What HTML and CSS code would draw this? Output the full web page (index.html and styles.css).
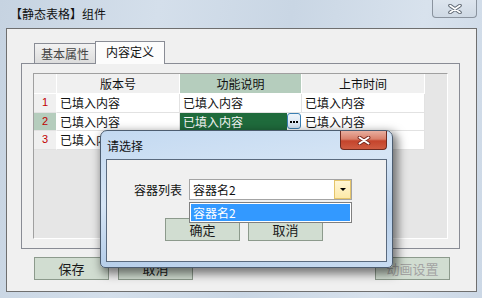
FILE: index.html
```html
<!DOCTYPE html>
<html lang="zh-CN">
<head>
    <meta charset="UTF-8">
    <title>【静态表格】组件</title>
    <link rel="stylesheet" href="styles.css">
</head>
<body>
    <div class="window">
        <div class="titlebar">
            <span class="title">【静态表格】组件</span>
            <div class="close-btn">
                <svg width="14" height="10" viewBox="0 0 14 10">
                    <path d="M2 1.5 L12 8.5 M12 1.5 L2 8.5" stroke="#5f6873" stroke-width="3.6" stroke-linecap="round"/>
                    <path d="M2 1.5 L12 8.5 M12 1.5 L2 8.5" stroke="#fff" stroke-width="1.6" stroke-linecap="round"/>
                </svg>
            </div>
        </div>

        <div class="client">
            <!-- tabs -->
            <div class="tabs">
                <div class="tab">基本属性</div>
                <div class="tab active">内容定义</div>
            </div>
            <div class="panel">
                <div class="grid">
                    <div class="cell head"></div>
                    <div class="cell head">版本号</div>
                    <div class="cell head sel-head">功能说明</div>
                    <div class="cell head">上市时间</div>

                    <div class="cell num">1</div>
                    <div class="cell">已填入内容</div>
                    <div class="cell">已填入内容</div>
                    <div class="cell">已填入内容</div>

                    <div class="cell num sel-num">2</div>
                    <div class="cell">已填入内容</div>
                    <div class="cell current">
                        <span class="current-text">已填入内容</span>
                        <span class="dots-btn">
                            <svg width="12" height="14" viewBox="0 0 12 14">
                                <rect x="2" y="7" width="2" height="2" fill="#000"/>
                                <rect x="5" y="7" width="2" height="2" fill="#000"/>
                                <rect x="8" y="7" width="2" height="2" fill="#000"/>
                            </svg>
                        </span>
                    </div>
                    <div class="cell">已填入内容</div>

                    <div class="cell num">3</div>
                    <div class="cell">已填入内容</div>
                    <div class="cell">已填入内容</div>
                    <div class="cell">已填入内容</div>
                </div>
            </div>
            <div class="buttons">
                <button type="button" class="btn">保存</button>
                <button type="button" class="btn">取消</button>
                <button type="button" class="btn disabled push-right">动画设置</button>
            </div>
        </div>

        <!-- modal dialog -->
        <div class="dialog">
            <div class="dialog-titlebar">
                <span class="dialog-title">请选择</span>
                <div class="dialog-close">
                    <svg width="14" height="9" viewBox="0 0 14 9">
                        <path d="M2.5 1.5 L11.5 7.5 M11.5 1.5 L2.5 7.5" stroke="#7a2a20" stroke-width="3.8" stroke-linecap="round"/>
                        <path d="M2.5 1.5 L11.5 7.5 M11.5 1.5 L2.5 7.5" stroke="#fff" stroke-width="2" stroke-linecap="round"/>
                    </svg>
                </div>
            </div>
            <div class="dialog-client">
                <div class="field-row">
                    <span class="field-label">容器列表</span>
                    <div class="combo">
                        <span class="combo-text">容器名2</span>
                        <span class="combo-arrow"></span>
                        <div class="combo-list">
                            <div class="combo-item">容器名2</div>
                        </div>
                    </div>
                </div>
                <div class="dialog-buttons">
                    <button type="button" class="btn">确定</button>
                    <button type="button" class="btn">取消</button>
                </div>
            </div>
        </div>
    </div>
</body>
</html>
```

FILE: styles.css
```css
body {
    margin: 0;
    width: 482px;
    height: 298px;
    overflow: hidden;
    font-family: "Noto Sans CJK SC", "Noto Sans", sans-serif;
    font-size: 12px;
    color: #111;
    background: linear-gradient(100deg, #c6d3e1 0%, #d4dfeb 30%, #c9d6e4 55%, #d8e2ed 80%, #ccd8e6 100%);
}

.window {
    position: relative;
    height: 298px;
    display: flex;
    flex-direction: column;
}

.titlebar {
    height: 28px;
    display: flex;
    align-items: flex-start;
    flex-shrink: 0;
}

.title {
    line-height: 28px;
    padding-left: 10px;
}

.close-btn {
    margin-left: auto;
    margin-right: 5px;
    width: 45px;
    height: 18px;
    box-sizing: border-box;
    border: 1px solid #8a939e;
    border-top: none;
    border-radius: 0 0 4px 4px;
    background: linear-gradient(#dde5ee, #cfd9e4);
    display: flex;
    align-items: center;
    justify-content: center;
}

.client {
    flex: 1;
    margin: 0 5px 6px 6px;
    border: 1px solid #6f6f6f;
    background-color: #f0f0f0;
    padding: 12px 0 0 14px;
}

/* tabs */
.tabs {
    display: flex;
    align-items: flex-end;
    height: 22px;
    padding-left: 13px;
}

.tab {
    height: 20px;
    box-sizing: border-box;
    padding: 0 6px;
    border: 1px solid #898c95;
    border-bottom: none;
    background: linear-gradient(#f2f2f2, #dcdcdc);
    color: #444;
    line-height: 19px;
}

.tab.active {
    height: 23px;
    margin-bottom: -1px;
    margin-left: -1px;
    padding: 0 10px;
    background: #fcfcfc;
    color: #111;
    line-height: 20px;
    position: relative;
}

.panel {
    width: 439px;
    height: 186px;
    box-sizing: border-box;
    border: 1px solid #898c95;
    padding: 9px 0 0 11px;
}

.grid {
    width: 415px;
    height: 166px;
    box-sizing: border-box;
    border-left: 1px solid #a0a0a0;
    border-top: 1px solid #a0a0a0;
    border-right: 1px solid #fff;
    border-bottom: 1px solid #fff;
    background-color: #e6e6e6;
    display: grid;
    grid-template-columns: 23px 123px 122px 123px;
    grid-template-rows: 20px 19px 18px 19px;
    align-content: start;
}

.cell {
    box-sizing: border-box;
    border-right: 1px solid #e2e2e2;
    border-bottom: 1px solid #e2e2e2;
    background-color: #fff;
    padding-left: 3px;
    line-height: 17px;
    white-space: nowrap;
    overflow: hidden;
}

.cell.head {
    background-color: #f0f0f0;
    border-color: #fff;
    text-align: center;
    padding-left: 0;
    line-height: 19px;
}

.cell.sel-head {
    background-color: #b5cdbd;
}

.cell.num {
    background-color: #f0f0f0;
    border-right-color: #fff;
    color: #c00000;
    text-align: center;
    padding-left: 0;
    font-family: "Liberation Sans", sans-serif;
    font-size: 11px;
}

.cell.sel-num {
    background-color: #b5cdbd;
}

.cell.current {
    display: flex;
    padding-left: 0;
    background-color: #fff;
    border-right-color: #fff;
}

.current-text {
    width: 106px;
    padding-left: 3px;
    background-color: #1f6b3c;
    color: #f4f4f4;
}

.dots-btn {
    width: 14px;
    height: 16px;
    box-sizing: border-box;
    border: 1px solid #3a7fb3;
    border-radius: 3px;
    background: linear-gradient(#eef4fa, #d3e2f1);
    display: flex;
}

/* buttons */
.btn {
    width: 75px;
    height: 23px;
    box-sizing: border-box;
    border: 1px solid #8c9a8c;
    background-color: #d1ddd1;
    font-family: "Noto Sans CJK SC", sans-serif;
    font-size: 13px;
    color: #1a1a1a;
    padding: 0;
    line-height: 20px;
}

.btn.disabled {
    color: #a3a3a3;
}

.buttons {
    display: flex;
    gap: 9px;
    margin-top: 8px;
    padding: 0 26px 0 13px;
}

.push-right {
    margin-left: auto;
}

/* dialog */
.dialog {
    position: absolute;
    left: 100px;
    top: 130px;
    width: 293px;
    height: 138px;
    box-sizing: border-box;
    border: 1px solid #4d5d70;
    border-radius: 7px 7px 5px 5px;
    background: linear-gradient(170deg, #c3d9f1 0%, #d6e5f5 40%, #b7cfea 70%, #c9dcf1 100%);
    box-shadow: 3px 4px 10px 2px rgba(0, 0, 0, 0.5);
    display: flex;
    flex-direction: column;
}

.dialog-titlebar {
    height: 28px;
    display: flex;
    align-items: flex-start;
    flex-shrink: 0;
}

.dialog-title {
    line-height: 26px;
    padding: 2px 0 0 6px;
    font-size: 12px;
}

.dialog-close {
    margin-left: auto;
    margin-right: 5px;
    width: 47px;
    height: 19px;
    box-sizing: border-box;
    border: 1px solid #6e2a20;
    border-top: none;
    border-radius: 0 0 4px 4px;
    background: linear-gradient(#e8ae9f 0%, #d9806b 45%, #c4442c 55%, #cf5c42 100%);
    display: flex;
    align-items: center;
    justify-content: center;
}

.dialog-client {
    flex: 1;
    margin: 0 5px 5px 5px;
    border: 1px solid #5a6a7e;
    background-color: #f0f0f0;
    padding: 19px 0 0 27px;
}

.field-row {
    display: flex;
    align-items: center;
    gap: 7px;
}

.field-label {
    font-size: 12px;
}

.combo {
    position: relative;
    width: 163px;
    height: 21px;
    box-sizing: border-box;
    border: 1px solid #a4a4a4;
    background-color: #fff;
    display: flex;
}

.combo-text {
    flex: 1;
    padding-left: 3px;
    line-height: 19px;
    font-size: 12px;
}

.combo-arrow {
    width: 17px;
    box-sizing: border-box;
    border: 1px solid #e4c46a;
    background: linear-gradient(#fff6d6, #fde9a8);
    position: relative;
}

.combo-arrow::after {
    content: "";
    position: absolute;
    left: 5px;
    top: 7px;
    border-left: 3px solid transparent;
    border-right: 3px solid transparent;
    border-top: 3px solid #000;
}

.combo-list {
    position: absolute;
    left: -1px;
    top: 22px;
    width: 163px;
    height: 21px;
    box-sizing: border-box;
    border: 1px solid #7f7f7f;
    background-color: #fff;
    padding: 1px;
    z-index: 2;
}

.combo-item {
    height: 17px;
    background-color: #3399ff;
    color: #fff;
    padding-left: 2px;
    line-height: 17px;
    font-size: 12px;
}

.dialog-buttons {
    display: flex;
    gap: 8px;
    margin-top: 18px;
    padding-left: 31px;
}
```
